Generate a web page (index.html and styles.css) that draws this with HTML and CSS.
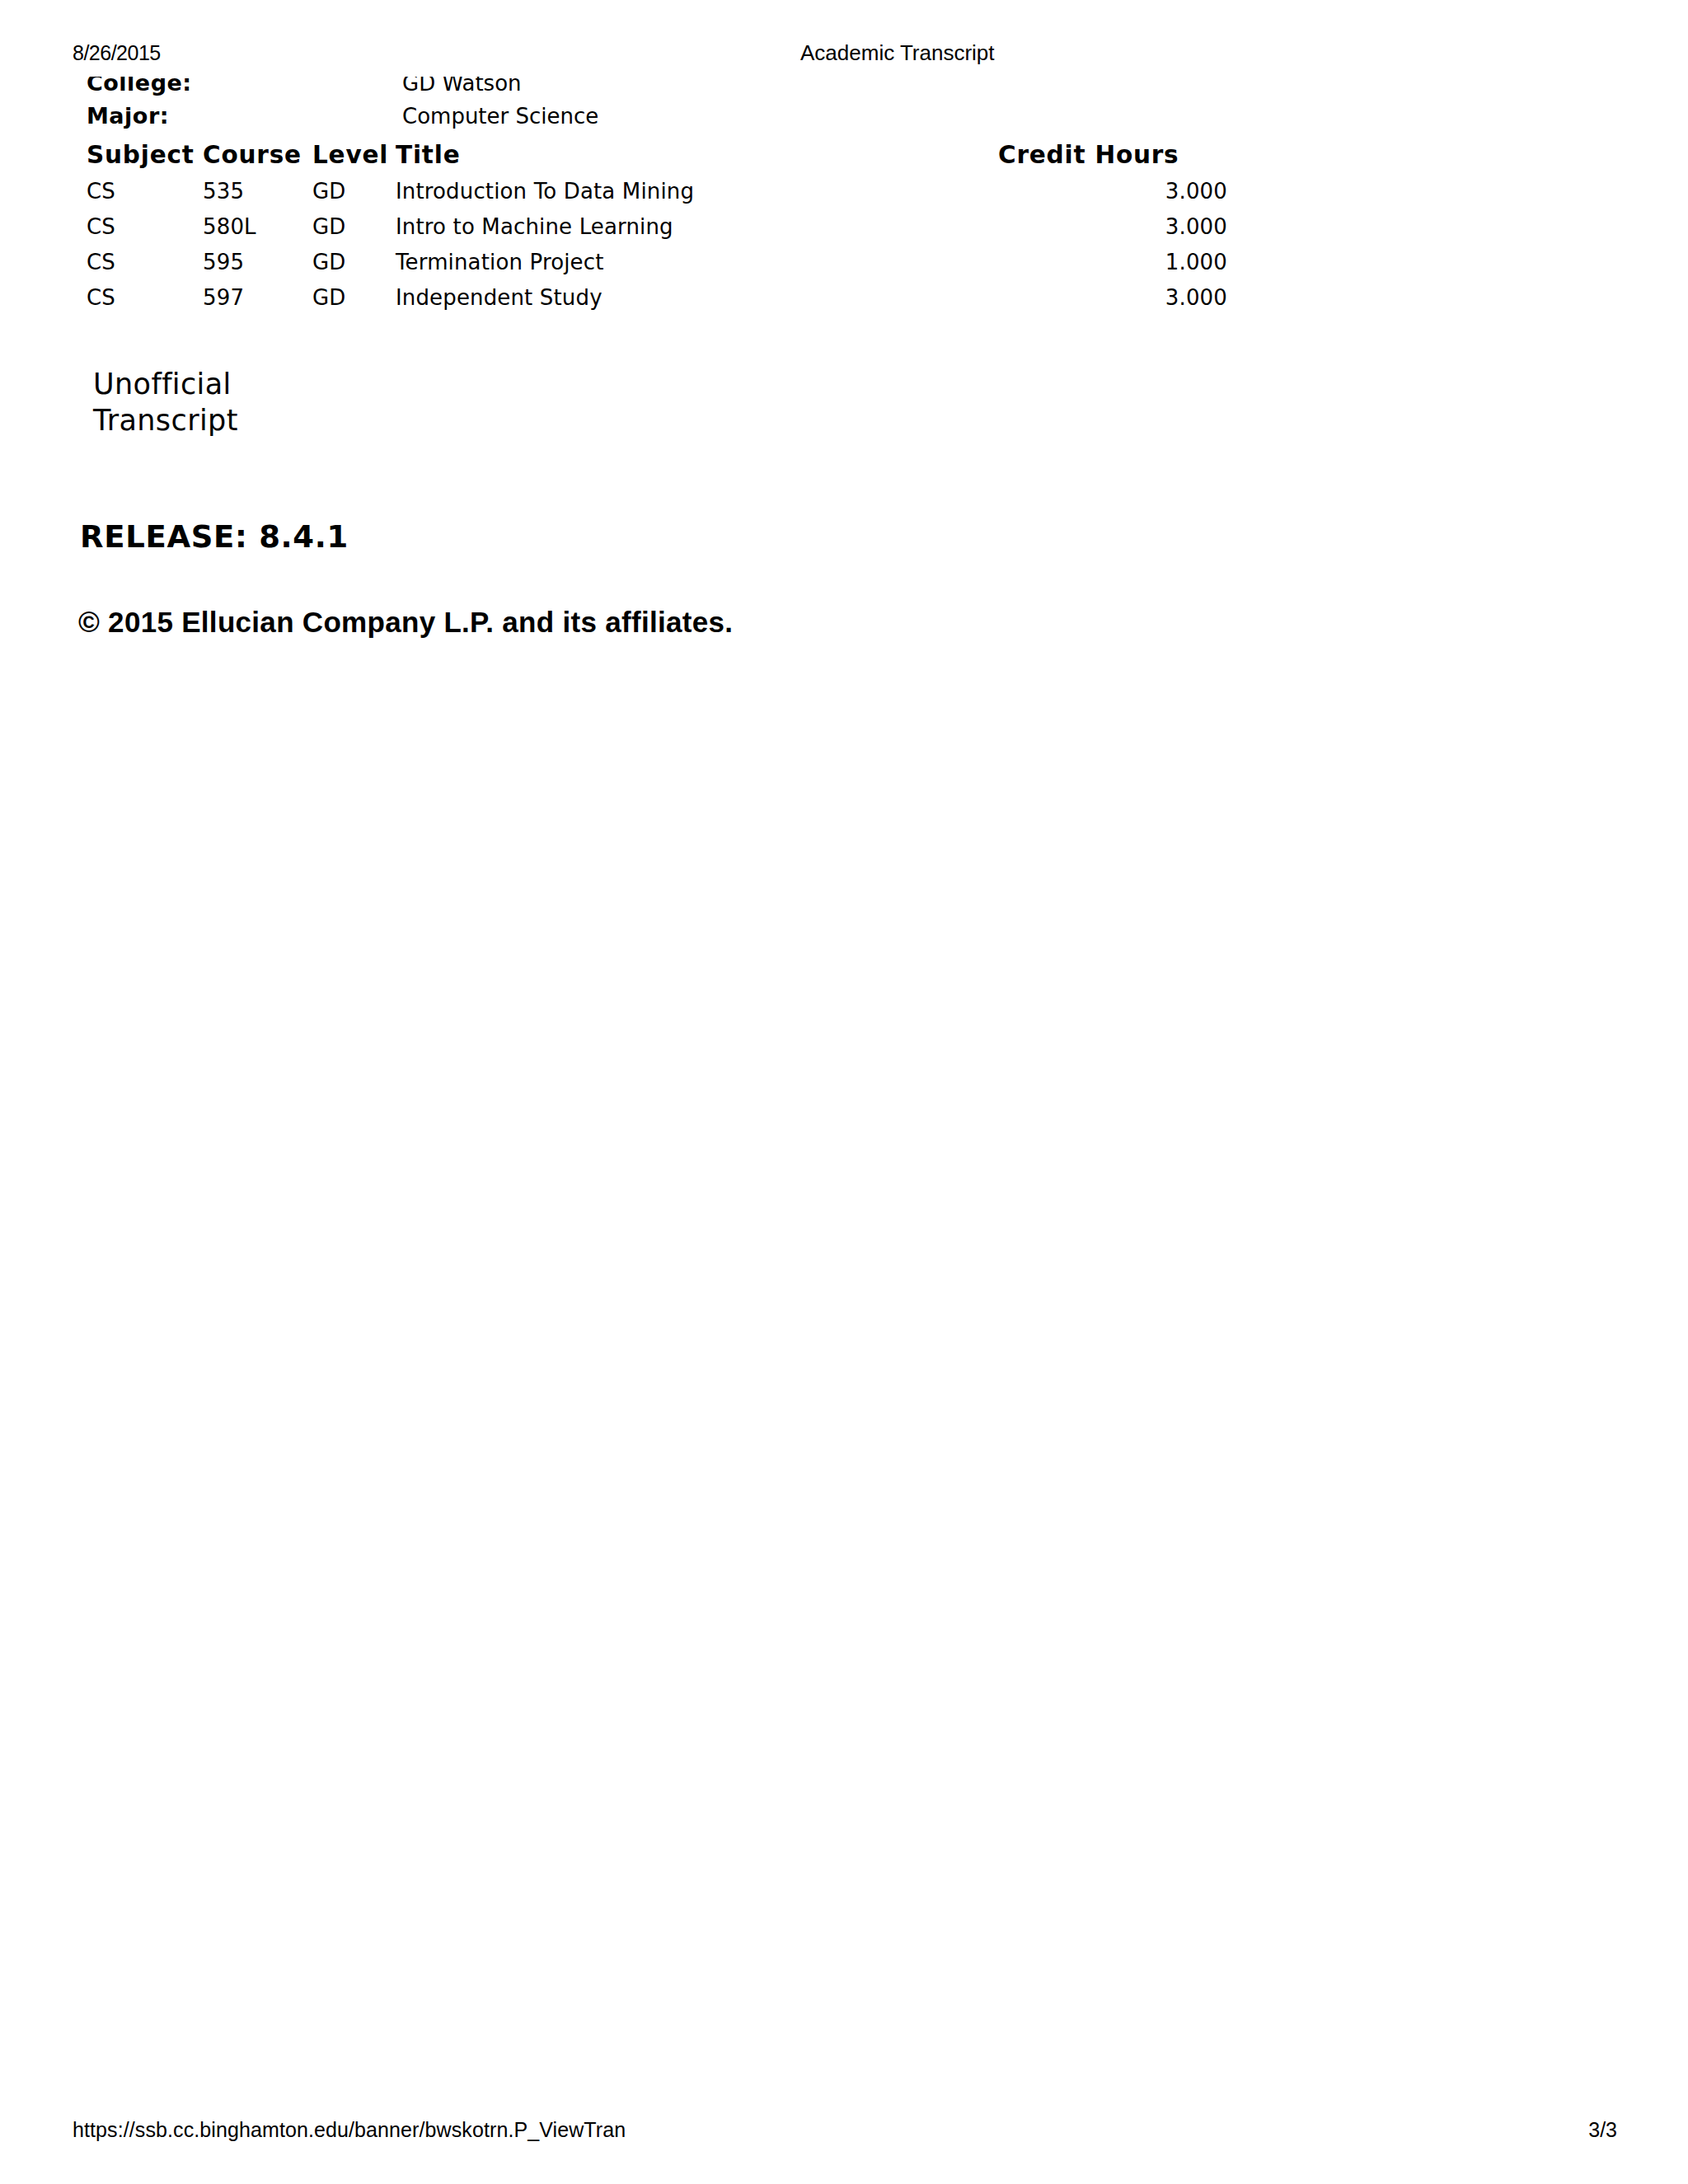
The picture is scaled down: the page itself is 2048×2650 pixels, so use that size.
FILE: index.html
```html
<!DOCTYPE html>
<html lang="en">
<head>
<meta charset="utf-8">
<title>Academic Transcript</title>
<link rel="stylesheet" href="styles.css">
</head>
<body>
<header class="print-header">
  <span class="print-date">8/26/2015</span>
  <span class="print-title">Academic Transcript</span>
</header>
<main class="clip">
  <div class="sheet">
    <div class="info-row"><span class="info-label">College:</span><span class="info-value">GD Watson</span></div>
    <div class="info-row"><span class="info-label">Major:</span><span class="info-value">Computer Science</span></div>
    <table class="courses">
      <thead>
        <tr>
          <th class="c-subj">Subject</th>
          <th class="c-course">Course</th>
          <th class="c-level">Level</th>
          <th class="c-title">Title</th>
          <th class="c-hours">Credit Hours</th>
        </tr>
      </thead>
      <tbody>
        <tr><td>CS</td><td>535</td><td>GD</td><td>Introduction To Data Mining</td><td class="num">3.000</td></tr>
        <tr><td>CS</td><td>580L</td><td>GD</td><td>Intro to Machine Learning</td><td class="num">3.000</td></tr>
        <tr><td>CS</td><td>595</td><td>GD</td><td>Termination Project</td><td class="num">1.000</td></tr>
        <tr><td>CS</td><td>597</td><td>GD</td><td>Independent Study</td><td class="num">3.000</td></tr>
      </tbody>
    </table>
    <p class="unofficial">Unofficial<br>Transcript</p>
    <p class="release">RELEASE: 8.4.1</p>
    <p class="copyright">© 2015 Ellucian Company L.P. and its affiliates.</p>
  </div>
</main>
<footer class="print-footer">
  <span class="print-url">https://ssb.cc.binghamton.edu/banner/bwskotrn.P_ViewTran</span>
  <span class="print-page">3/3</span>
</footer>
</body>
</html>
```
FILE: styles.css
```css
html, body {
  margin: 0;
  padding: 0;
  background: #ffffff;
  color: #000000;
}
body {
  width: 2048px;
  height: 2650px;
  display: flex;
  flex-direction: column;
  overflow: hidden;
}
.print-header {
  display: grid;
  grid-template-columns: 883px auto;
  padding: 49px 0 0 88px;
  height: 30px;
  font-family: "Liberation Sans", Arial, sans-serif;
  font-size: 26px;
  line-height: 30px;
}
.print-date {
  font-size: 25px;
  letter-spacing: -0.5px;
}
.clip {
  margin-top: 14px;
  overflow: hidden;
  flex: 0 0 auto;
}
.sheet {
  margin-top: -12px;
  font-family: "DejaVu Sans", Verdana, sans-serif;
  font-size: 26px;
}
.info-row {
  display: grid;
  grid-template-columns: 383px auto;
  padding-left: 105px;
  height: 40px;
  line-height: 40px;
}
.info-label {
  font-weight: bold;
  font-size: 27px;
  letter-spacing: 0.5px;
}
.courses {
  margin: 5px 0 0 100px;
  border-collapse: collapse;
  table-layout: fixed;
  width: 1394px;
}
.courses th, .courses td {
  padding: 0 5px;
  text-align: left;
  white-space: nowrap;
}
.courses th {
  font-size: 29.5px;
  letter-spacing: 0.8px;
  height: 45px;
  line-height: 45px;
}
.courses td {
  height: 43px;
  line-height: 43px;
  letter-spacing: 0.15px;
}
.c-subj { width: 131px; }
.c-course { width: 123px; }
.c-level { width: 91px; }
.c-title { width: 721px; }
.c-hours { width: 278px; }
.courses td.num { text-align: right; }
.unofficial {
  margin: 61px 0 0 113px;
  font-size: 35px;
  line-height: 44px;
  letter-spacing: 0.4px;
}
.release {
  margin: 98px 0 0 97px;
  font-size: 37px;
  font-weight: bold;
  line-height: 44px;
  letter-spacing: 0.7px;
}
.copyright {
  margin: 61px 0 0 95px;
  font-family: "Liberation Sans", Arial, sans-serif;
  font-size: 35px;
  font-weight: bold;
  line-height: 40px;
  letter-spacing: 0.3px;
}
.print-footer {
  margin-top: auto;
  display: flex;
  justify-content: space-between;
  padding: 0 86px 51px 88px;
  font-family: "Liberation Sans", Arial, sans-serif;
  font-size: 25px;
  line-height: 30px;
}
.print-url {
  letter-spacing: 0.1px;
}
```
